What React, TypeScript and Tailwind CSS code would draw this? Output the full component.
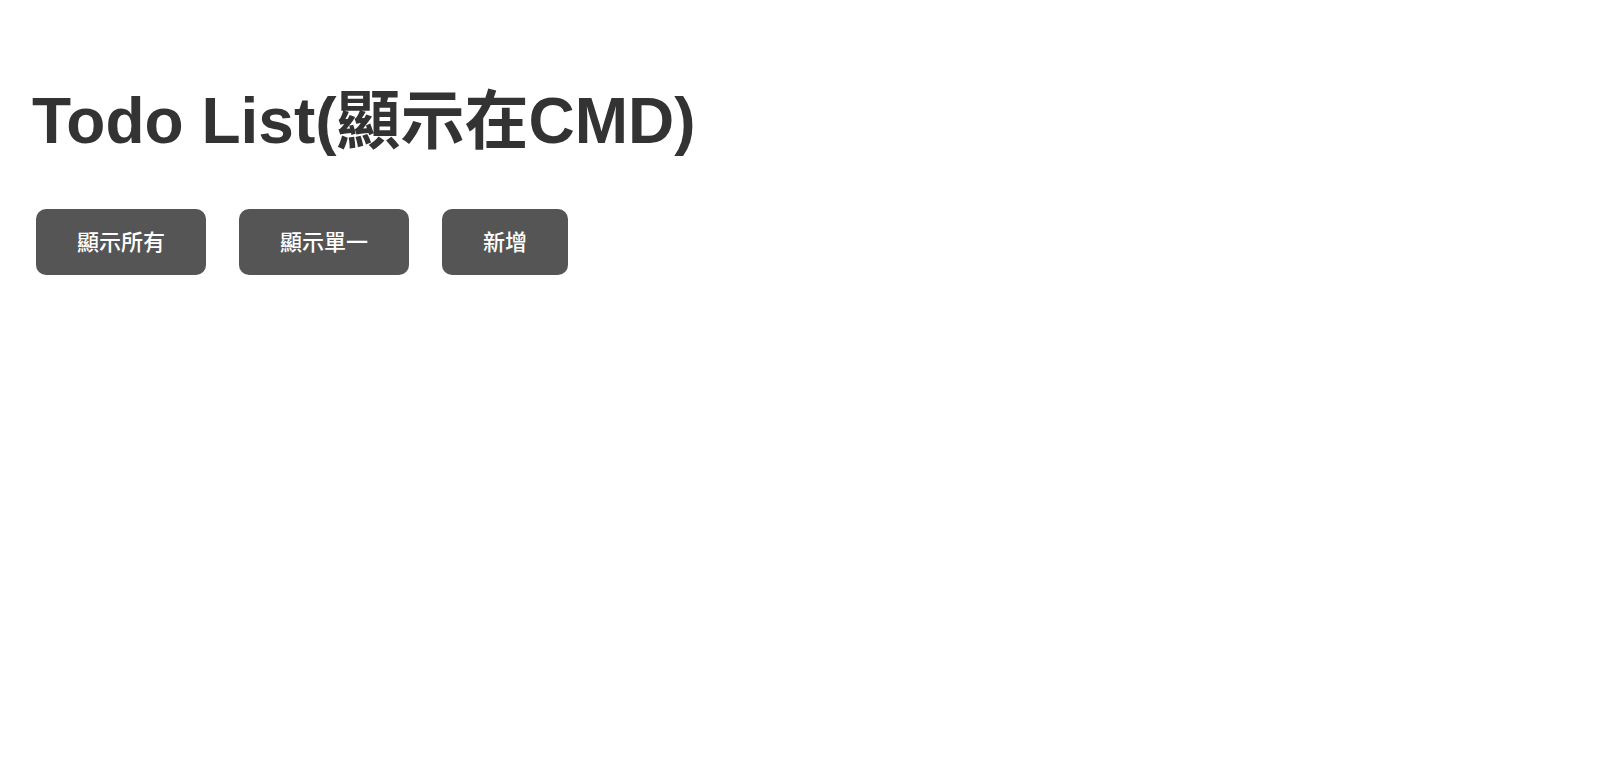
export default function App() {
  const buttons = ["顯示所有", "顯示單一", "新增"];

  return (
    <div className="min-h-screen bg-white px-8 pt-[85px] font-['Liberation_Sans','Noto_Sans_CJK_TC',sans-serif]">
      <h1 className="text-[64px] font-bold leading-[1.15] text-[#333333]">
        Todo List(顯示在CMD)
      </h1>

      <div className="mt-[50px] flex gap-[33px] pl-1">
        {buttons.map((label) => (
          <button
            key={label}
            className="h-[66px] rounded-[10px] bg-[#555555] px-[41px] pt-px text-[22px] font-medium text-white"
          >
            {label}
          </button>
        ))}
      </div>
    </div>
  );
}
